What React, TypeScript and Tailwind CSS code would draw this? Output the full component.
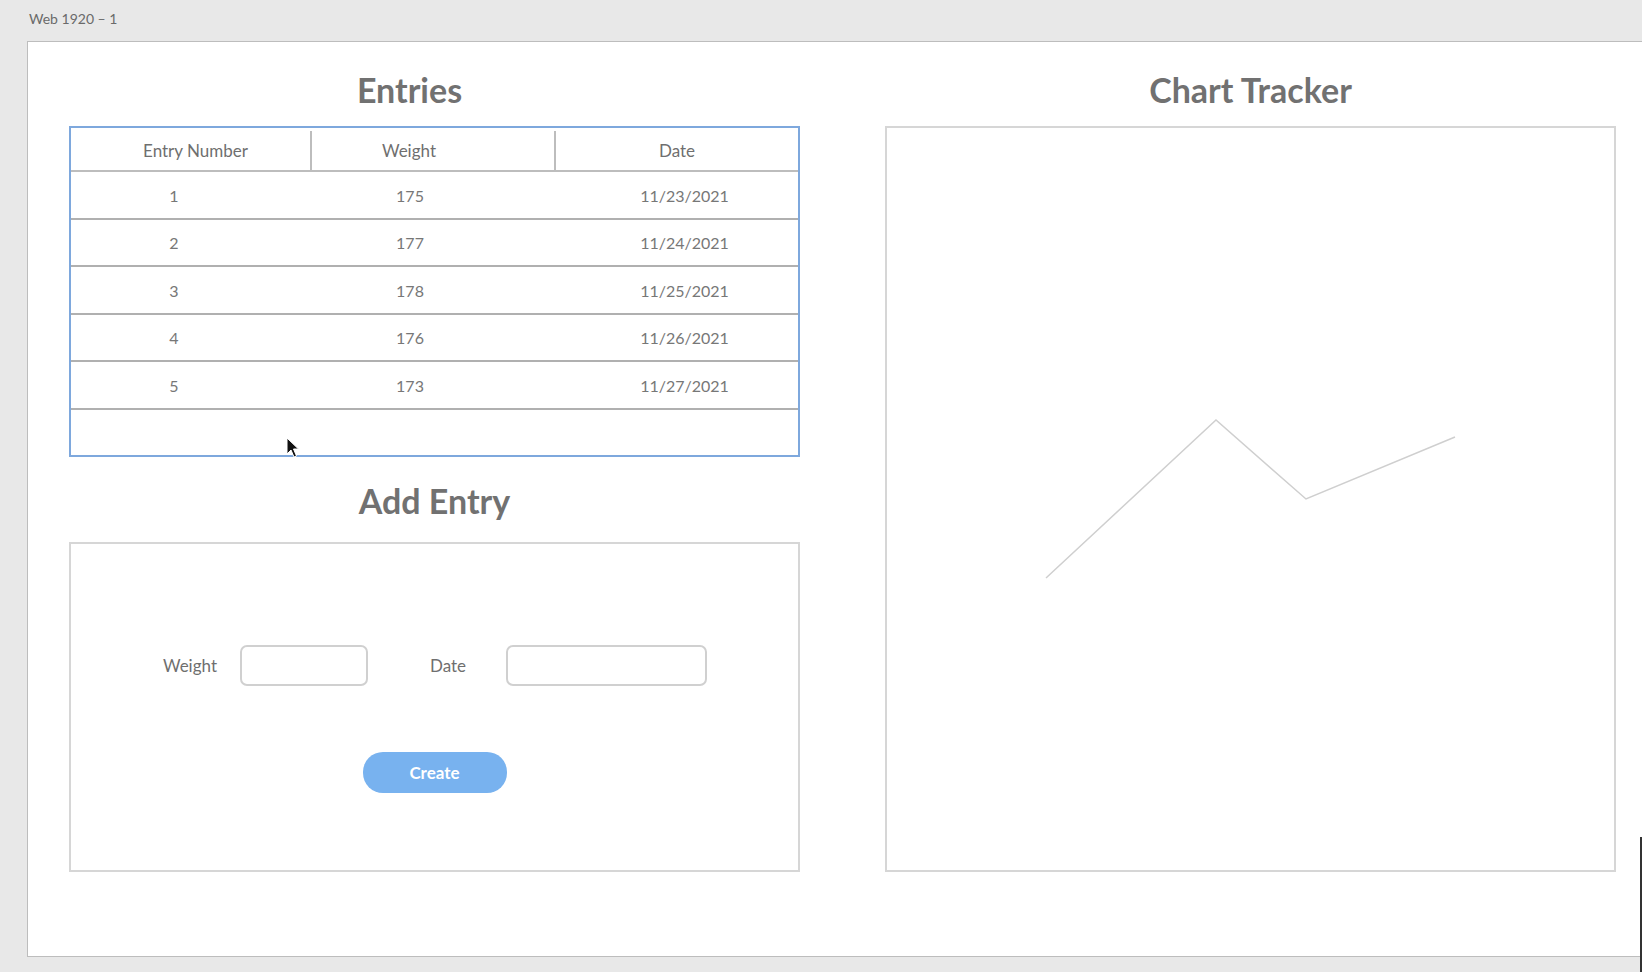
const entries = [
  { id: 1, weight: 175, date: "11/23/2021" },
  { id: 2, weight: 177, date: "11/24/2021" },
  { id: 3, weight: 178, date: "11/25/2021" },
  { id: 4, weight: 176, date: "11/26/2021" },
  { id: 5, weight: 173, date: "11/27/2021" },
];

const font = "font-['Lato','Open_Sans',sans-serif]";

function Title({ children, className = "" }: { children: string; className?: string }) {
  return (
    <h2 className={`h-[44px] text-center text-[34px] leading-[44px] font-bold text-[#717171] ${className}`}>
      {children}
    </h2>
  );
}

export default function App() {
  return (
    <div className={`relative h-[972px] w-full overflow-hidden bg-[#e8e8e8] ${font}`}>
      {/* artboard label */}
      <div className="h-[41px] pl-[29px] pt-[10px] text-[14px] leading-[18px] text-[#6a6a6a]">
        Web 1920 – 1
      </div>

      {/* artboard */}
      <div className="ml-[27px] flex h-[916px] w-[1640px] gap-[85px] border border-[#bdbdbd] bg-white pl-[41px] pt-[26px]">
        {/* left column */}
        <div className="flex w-[731px] flex-col">
          <Title className="pr-[50px]">Entries</Title>

          <div className="mt-[14px] flex h-[331px] flex-col border-2 border-[#7ea8dd] text-[#6f6f6f]">
            <div className="flex h-[44px] shrink-0 border-b-2 border-[#bdbdbd] pt-[3px] text-[17px]">
              <div className="flex w-[241px] items-center justify-center border-r-2 border-[#bdbdbd] pl-[10px]">
                Entry Number
              </div>
              <div className="flex w-[244px] items-center justify-center border-r-2 border-[#bdbdbd] pr-[48px]">
                Weight
              </div>
              <div className="flex flex-1 items-center justify-center">Date</div>
            </div>

            {entries.map((e) => (
              <div
                key={e.id}
                className="flex h-[47.5px] shrink-0 border-b-2 border-[#b0b0b0] pt-[2px] text-[16px] text-[#777777]"
              >
                <div className="flex w-[206px] items-center justify-center">{e.id}</div>
                <div className="flex w-[266px] items-center justify-center">{e.weight}</div>
                <div className="flex flex-1 items-center justify-center pl-[28px]">{e.date}</div>
              </div>
            ))}
            <div className="flex-1" />
          </div>

          <Title className="mt-[22px]">Add Entry</Title>

          <div className="mt-[19px] flex h-[330px] flex-col border-2 border-[#d6d6d6] pt-[101px]">
            <div className="flex items-center pl-[92px] text-[17px] text-[#6f6f6f]">
              <span className="w-[77px]">Weight</span>
              <input className="h-[41px] w-[128px] rounded-[7px] border-2 border-[#d0d0d0] outline-none" />
              <span className="ml-[62px] w-[76px]">Date</span>
              <input className="h-[41px] w-[201px] rounded-[7px] border-2 border-[#d0d0d0] outline-none" />
            </div>
            <button className="mx-auto mt-[66px] h-[41px] w-[144px] rounded-[20px] bg-[#78b2ef] text-[17px] font-bold text-white">
              Create
            </button>
          </div>
        </div>

        {/* right column */}
        <div className="flex w-[731px] flex-col">
          <Title>Chart Tracker</Title>
          <div className="mt-[14px] h-[746px] border-2 border-[#d6d6d6]">
            <svg width="727" height="742" className="block">
              <polyline
                points="159,450 329,292 419,371 568,309"
                fill="none"
                stroke="#cfcfcf"
                strokeWidth="1.5"
              />
            </svg>
          </div>
        </div>
      </div>

      {/* mouse pointer */}
      <svg
        className="absolute left-[286px] top-[437px]"
        width="14"
        height="22"
        viewBox="0 0 14 22"
      >
        <path d="M1 1 L1 17 L5 13 L8 20 L10.5 19 L7.5 12 L12.5 12 Z" fill="#111" stroke="#fff" strokeWidth="1" />
      </svg>

      {/* window edge */}
      <div className="absolute right-0 top-[837px] h-[135px] w-[2px] bg-[#333]" />
    </div>
  );
}
